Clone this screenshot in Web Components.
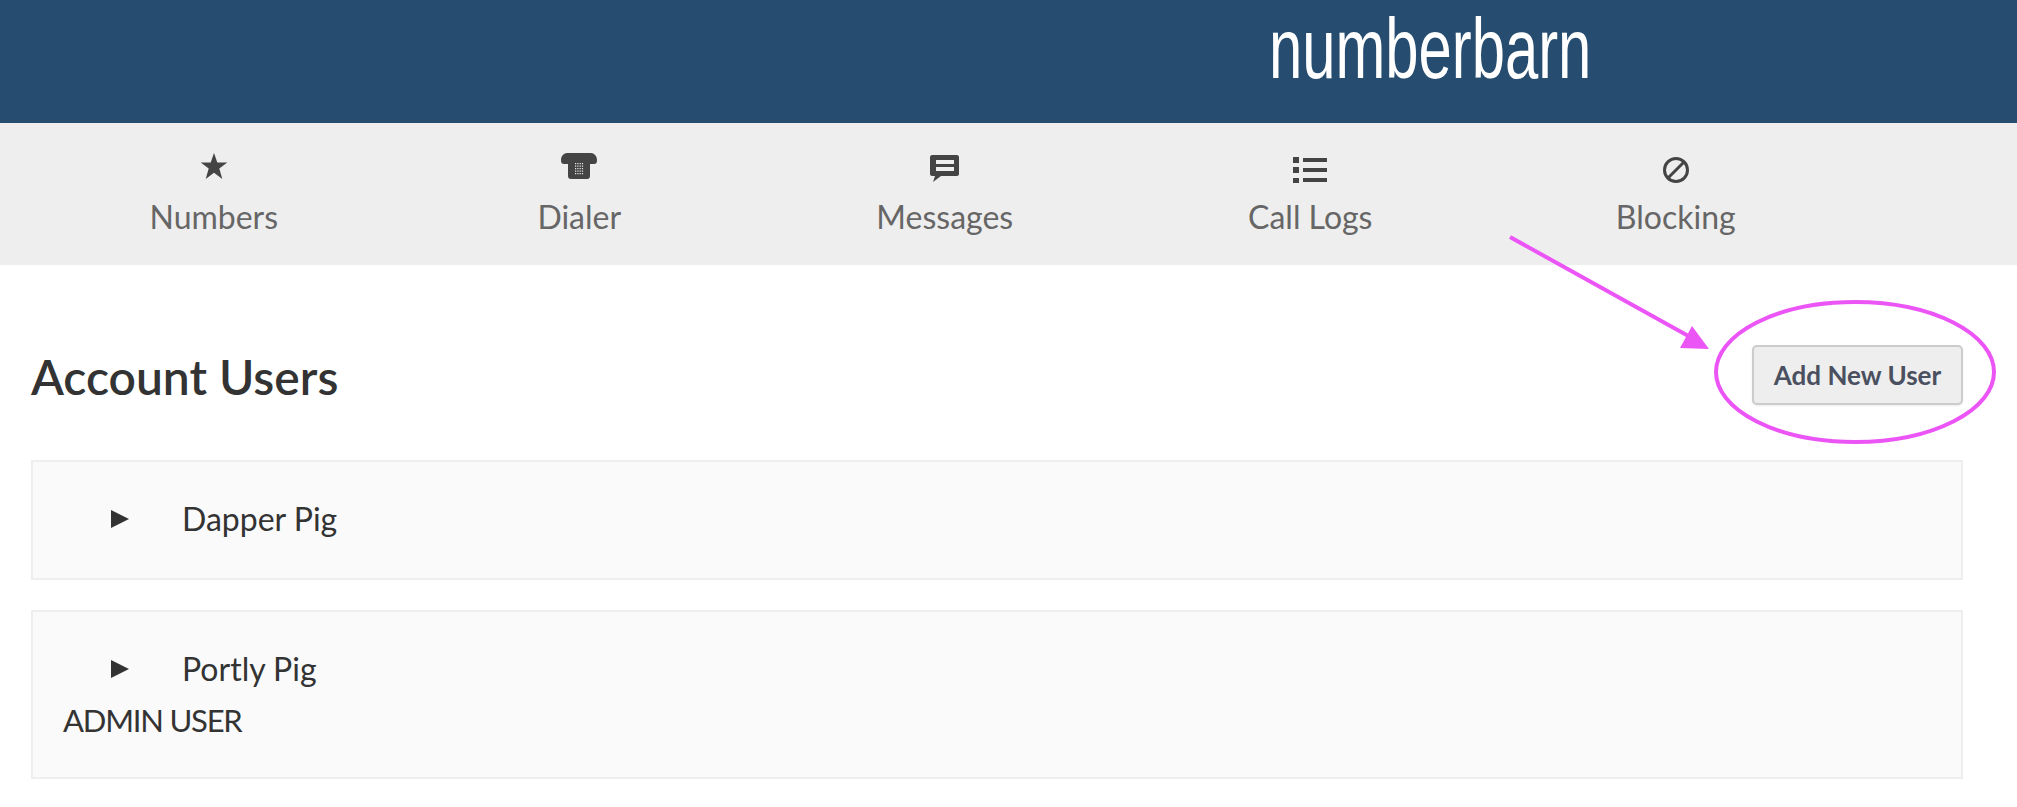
<!DOCTYPE html>
<html>
<head>
<meta charset="utf-8">
<title>Account Users</title>
<style>
  html, body { margin: 0; padding: 0; background: #fff; }
  body { font-family: Lato, "Noto Sans", sans-serif; color: #333; position: relative; height: 807px; overflow: hidden; }
</style>
</head>
<body>
<nb-header></nb-header>
<nb-nav>
  <nb-nav-item label="Numbers"><svg viewBox="0 0 28 32" width="28" height="32"><path d="M14 1l3.300 9.500h10l-8 6 3 10.500-8.300-6.300-8.300 6.300 3-10.500-8-6h10z" fill="#444"/></svg></nb-nav-item>
  <nb-nav-item label="Dialer"><svg viewBox="0 0 36 32" width="36" height="32"><path d="M6 1h24c3 0 6 3 6 7 0 3-1 4-3 4h-4v12c0 2-1 3-3 3H10c-2 0-3-1-3-3V12H3c-2 0-3-1-3-4 0-4 3-7 6-7z" fill="#444"/><path d="M14 11h1.200v1.200H14zM16.300 11h1.200v1.200h-1.200zM18.600 11h1.200v1.200h-1.200zM20.900 11h1.200v1.200h-1.200zM14 13.500h1.200v1.200H14zM16.300 13.500h1.200v1.200h-1.200zM18.600 13.500h1.200v1.200h-1.200zM20.900 13.500h1.200v1.200h-1.200zM14 16h1.200v1.200H14zM16.300 16h1.200v1.200h-1.200zM18.600 16h1.200v1.200h-1.200zM20.900 16h1.200v1.200h-1.200zM14 18.500h1.200v1.200H14zM16.300 18.500h1.200v1.200h-1.200zM18.600 18.500h1.200v1.200h-1.200zM20.900 18.500h1.200v1.200h-1.200zM14 21h1.200v1.200H14zM16.300 21h1.200v1.200h-1.200zM18.600 21h1.200v1.200h-1.200zM20.900 21h1.200v1.200h-1.200z" fill="#e4e4e4"/></svg></nb-nav-item>
  <nb-nav-item label="Messages"><svg viewBox="0 0 29 32" width="29" height="32"><path d="M2 3h25c1 0 2 1 2 2v17c0 1-1 2-2 2H11l-8 6 2-6H2c-1 0-2-1-2-2V5c0-1 1-2 2-2z" fill="#444"/><path d="M6 8h18v4H6zM6 15h18v4H6z" fill="#eee"/></svg></nb-nav-item>
  <nb-nav-item label="Call Logs"><svg viewBox="0 0 34 32" width="34" height="32"><path d="M0 5h6v6H0zM0 15h6v6H0zM0 26h6v5H0zM10 6h24v4H10zM10 16h24v4H10zM10 26h24v4H10z" fill="#444"/></svg></nb-nav-item>
  <nb-nav-item label="Blocking"><svg viewBox="0 0 28 32" width="28" height="32"><circle cx="14" cy="18" r="11.500" fill="none" stroke="#444" stroke-width="3"/><path d="M6 26L22 10" stroke="#444" stroke-width="3"/></svg></nb-nav-item>
</nb-nav>
<nb-page-head heading="Account Users"><nb-button>Add New User</nb-button></nb-page-head>
<nb-user-card name="Dapper Pig"></nb-user-card>
<nb-user-card name="Portly Pig" role="ADMIN USER"></nb-user-card>
<nb-annotation></nb-annotation>

<script>
  class NbHeader extends HTMLElement {
    constructor() {
      super();
      this.attachShadow({ mode: "open" }).innerHTML = `
        <style>
          :host { display:block; height:123px; background:#264c70; }
          .logo {
            display:block; width:max-content; margin-left:1269px;
            font:400 86px/96px "Liberation Sans", sans-serif; color:#fff;
            transform:scaleX(.695); transform-origin:left top;
          }
        </style>
        <span class="logo">numberbarn</span>`;
    }
  }

  class NbNav extends HTMLElement {
    constructor() {
      super();
      this.attachShadow({ mode: "open" }).innerHTML = `
        <style>
          :host {
            display:grid; grid-template-columns:repeat(5,365.500px);
            height:142px; padding-left:31px; background:#eee; box-sizing:border-box;
          }
        </style>
        <slot></slot>`;
    }
  }

  class NbNavItem extends HTMLElement {
    constructor() {
      super();
      this.attachShadow({ mode: "open" }).innerHTML = `
        <style>
          :host { display:flex; flex-direction:column; align-items:center; padding-top:29px; color:#666; }
          .icon { height:32px; display:flex; align-items:center; justify-content:center; }
          ::slotted(svg) { display:block; }
          .label { margin-top:13px; font:400 32px/40px Lato, sans-serif; }
        </style>
        <div class="icon"><slot></slot></div>
        <div class="label"></div>`;
    }
    connectedCallback() {
      this.shadowRoot.querySelector(".label").textContent = this.getAttribute("label");
    }
  }

  class NbPageHead extends HTMLElement {
    constructor() {
      super();
      this.attachShadow({ mode: "open" }).innerHTML = `
        <style>
          :host {
            display:flex; justify-content:space-between; align-items:center;
            margin:80px 54px 55px 31px; height:60px;
          }
          h1 { margin:4px 0 0; font:600 48px/60px Lato, sans-serif; color:#333; }
        </style>
        <h1></h1>
        <slot></slot>`;
    }
    connectedCallback() {
      this.shadowRoot.querySelector("h1").textContent = this.getAttribute("heading");
    }
  }

  class NbButton extends HTMLElement {
    constructor() {
      super();
      this.attachShadow({ mode: "open" }).innerHTML = `
        <style>
          :host {
            display:flex; align-items:center; justify-content:center; width:211px; height:60px;
            box-sizing:border-box; background:#eee; border:2px solid #ccc; border-radius:5px;
            box-shadow:0 1px 2px rgba(0,0,0,.08);
            font:700 26px/1 Lato, sans-serif; color:#4a5060;
          }
        </style>
        <slot></slot>`;
    }
  }

  class NbUserCard extends HTMLElement {
    constructor() {
      super();
      this.attachShadow({ mode: "open" }).innerHTML = `
        <style>
          :host {
            display:block; box-sizing:border-box; margin:0 54px 30px 31px; padding:35px 30px 37px;
            background:#fafafa; border:2px solid #eee; color:#333;
            font:400 32px/44px Lato, sans-serif;
          }
          .row { display:flex; align-items:center; padding-left:48px; }
          .arrow { width:0; height:0; border-left:18px solid #333; border-top:9px solid transparent; border-bottom:9px solid transparent; margin-right:53px; }
          .role { margin-top:10px; font-size:31px; line-height:39px; letter-spacing:-1.200px; }
          .role:empty { display:none; }
        </style>
        <div class="row"><span class="arrow"></span><span class="name"></span></div>
        <div class="role"></div>`;
    }
    connectedCallback() {
      this.shadowRoot.querySelector(".name").textContent = this.getAttribute("name");
      this.shadowRoot.querySelector(".role").textContent = this.getAttribute("role") || "";
    }
  }

  // hand-drawn markup over the page, so it sits on a free canvas
  class NbAnnotation extends HTMLElement {
    constructor() {
      super();
      this.attachShadow({ mode: "open" }).innerHTML = `
        <style>
          :host { position:absolute; left:0; top:0; width:2017px; height:807px; pointer-events:none; }
          svg { display:block; }
        </style>
        <svg width="2017" height="807" viewBox="0 0 2017 807">
          <path d="M1510 237L1692 338" stroke="#ec55f5" stroke-width="4" fill="none"/>
          <path d="M1692 326L1709 349L1680 348Z" fill="#ec55f5"/>
          <ellipse cx="1855" cy="372" rx="139" ry="70" fill="none" stroke="#ec55f5" stroke-width="4"/>
        </svg>`;
    }
  }

  customElements.define("nb-header", NbHeader);
  customElements.define("nb-nav", NbNav);
  customElements.define("nb-nav-item", NbNavItem);
  customElements.define("nb-page-head", NbPageHead);
  customElements.define("nb-button", NbButton);
  customElements.define("nb-user-card", NbUserCard);
  customElements.define("nb-annotation", NbAnnotation);
</script>
</body>
</html>
